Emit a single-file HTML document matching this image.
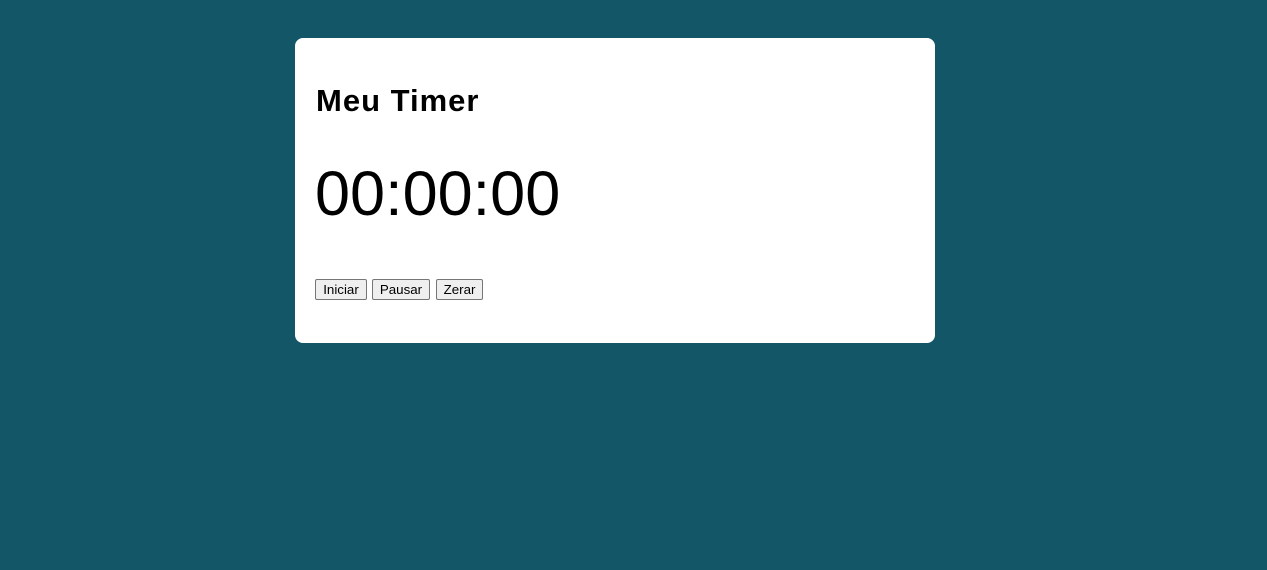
<!DOCTYPE html>
<html><head><style>
body{margin:0;background:#125667;width:1267px;height:570px;overflow:hidden;font-family:"Liberation Sans",Arial,sans-serif;}
.card{position:absolute;left:295px;top:38px;width:640px;height:305px;background:#fff;border-radius:8px;}
h1{position:absolute;left:21px;top:45px;margin:0;font-size:31px;font-weight:bold;line-height:36px;letter-spacing:1px;color:#000;}
.t{position:absolute;left:20px;top:120px;font-size:63px;line-height:72px;color:#000;}
.b{position:absolute;top:241px;height:21px;box-sizing:border-box;border:1px solid #767676;border-radius:2px;background:#efefef;font-size:13.33px;line-height:19px;text-align:center;color:#000;}
</style></head><body>
<div class="card">
<h1>Meu Timer</h1>
<div class="t">00:00:00</div>
<div class="b" style="left:20px;width:52px">Iniciar</div>
<div class="b" style="left:77px;width:58px">Pausar</div>
<div class="b" style="left:141px;width:47px">Zerar</div>
</div>
</body></html>
